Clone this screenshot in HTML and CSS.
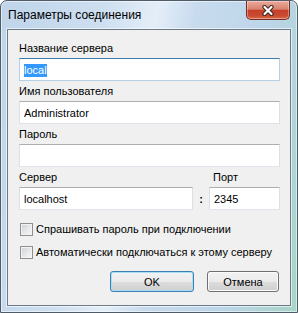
FILE: index.html
```html
<!DOCTYPE html>
<html lang="ru">
<head>
<meta charset="UTF-8" />
<title>Параметры соединения</title>
<link rel="stylesheet" href="styles.css">
</head>
<body>
  <div class="window">
    <div class="titlebar">
      <span class="title">Параметры соединения</span>
      <button class="close-btn" type="button" aria-label="Закрыть">
        <svg width="12" height="11" viewBox="0 0 12 11">
          <path d="M2.5 2 L9.5 9 M9.5 2 L2.5 9" stroke="#3a2421" stroke-width="4.2" stroke-linecap="round" fill="none"/>
          <path d="M2.5 2 L9.5 9 M9.5 2 L2.5 9" stroke="#ffffff" stroke-width="2.2" stroke-linecap="round" fill="none"/>
        </svg>
      </button>
    </div>

    <form class="client">
      <label class="field-label">Название сервера</label>
      <div class="textbox focused"><span class="selection">local</span></div>

      <label class="field-label" for="user">Имя пользователя</label>
      <input class="textbox" type="text" id="user" value="Administrator" />

      <label class="field-label" for="password">Пароль</label>
      <input class="textbox" type="password" id="password" />

      <div class="server-row">
        <div class="server-field">
          <label class="field-label" for="server">Сервер</label>
          <input class="textbox" type="text" id="server" value="localhost" />
        </div>
        <span class="colon">:</span>
        <div class="port-field">
          <label class="field-label port-label" for="port">Порт</label>
          <input class="textbox" type="text" id="port" value="2345" />
        </div>
      </div>

      <label class="check-row"><span class="check"></span>Спрашивать пароль при подключении</label>
      <label class="check-row"><span class="check"></span>Автоматически подключаться к этому серверу</label>

      <div class="buttons">
        <button class="btn btn-ok" type="button">OK</button>
        <button class="btn btn-cancel" type="button">Отмена</button>
      </div>
    </form>
  </div>
</body>
</html>
```

FILE: styles.css
```css
body {
  margin: 0;
  background: #ffffff;
  font-family: "Liberation Sans", Arial, sans-serif;
  font-size: 11px;
  color: #000;
}
.window {
  width: 298px;
  height: 313px;
  box-sizing: border-box;
  border: 1px solid #4f5b67;
  border-radius: 7px 7px 0 0;
  background: linear-gradient(100deg, #bfd4ea 0%, #cddff0 30%, #e4eef8 45%, #c8dbee 56%, #bcd5e9 78%, #a6d5c8 100%);
  box-shadow: inset 0 0 0 1px rgba(255,255,255,0.55);
  display: flex;
  flex-direction: column;
}
.titlebar {
  height: 28px;
  display: flex;
  align-items: flex-start;
}
.title {
  font-size: 12px;
  line-height: 15px;
  padding: 7px 0 0 7px;
  color: #000;
}
.close-btn {
  margin-left: auto;
  margin-right: 7px;
  width: 44px;
  height: 19px;
  padding: 0;
  border: 1px solid #7a2d24;
  border-top: none;
  border-radius: 0 0 5px 5px;
  background: linear-gradient(#e9aa9c 0%, #d98370 45%, #c6402b 52%, #c94a30 80%, #d86a48 100%);
  box-shadow: inset 0 0 0 1px rgba(255,255,255,0.35);
  display: flex;
  align-items: center;
  justify-content: center;
}
.client {
  flex: 1;
  margin: 0 6px 6px;
  border: 1px solid #6d7a88;
  background: #f0f0f0;
  box-shadow: 0 0 0 1px rgba(255,255,255,0.6);
  padding: 11px 10px 0 11px;
  display: flex;
  flex-direction: column;
}
.field-label {
  display: block;
  line-height: 14px;
  margin-bottom: 3px;
}
.textbox {
  display: block;
  box-sizing: border-box;
  width: 100%;
  height: 23px;
  margin: 0 0 3px;
  padding: 0 4px;
  border: 1px solid #e2e3ea;
  border-top-color: #abadb3;
  border-left-color: #dbdfe6;
  border-right-color: #dbdfe6;
  background: #fff;
  font-family: inherit;
  font-size: 11px;
  line-height: 21px;
  color: #000;
  outline: none;
}
.textbox.focused {
  border-color: #b5cfe7;
  border-top-color: #3d7bad;
}
.selection {
  background: #3399ff;
  color: #fff;
  display: inline-block;
  line-height: 13px;
  vertical-align: middle;
}
.server-row {
  display: flex;
  align-items: flex-end;
}
.server-field {
  width: 174px;
}
.colon {
  width: 16px;
  text-align: center;
  font-weight: bold;
  line-height: 14px;
  margin-bottom: 7px;
}
.port-field {
  flex: 1;
}
.port-label {
  padding-left: 4px;
}
.check-row {
  display: flex;
  align-items: center;
  line-height: 14px;
  margin-top: 9px;
}
.check {
  width: 13px;
  height: 13px;
  box-sizing: border-box;
  margin: 0 3px 0 1px;
  border: 1px solid #8e8f8f;
  background: linear-gradient(135deg, #cdd1d6 0%, #e9eaec 60%, #f7f7f7 100%);
  box-shadow: inset 0 0 0 1px #f4f4f4;
}
.buttons {
  display: flex;
  justify-content: flex-end;
  gap: 13px;
  margin-top: 12px;
  padding-right: 1px;
}
.btn {
  height: 21px;
  padding: 0;
  border: 1px solid #707070;
  border-radius: 3px;
  background: linear-gradient(#f2f2f2 0%, #ebebeb 50%, #dddddd 51%, #cfcfcf 100%);
  box-shadow: inset 0 0 0 1px #fbfbfb;
  font-family: inherit;
  font-size: 11px;
  color: #000;
}
.btn-ok {
  width: 84px;
  border-color: #3c7fb1;
  box-shadow: inset 0 0 0 1px #a8def7;
}
.btn-cancel {
  width: 72px;
}
```
